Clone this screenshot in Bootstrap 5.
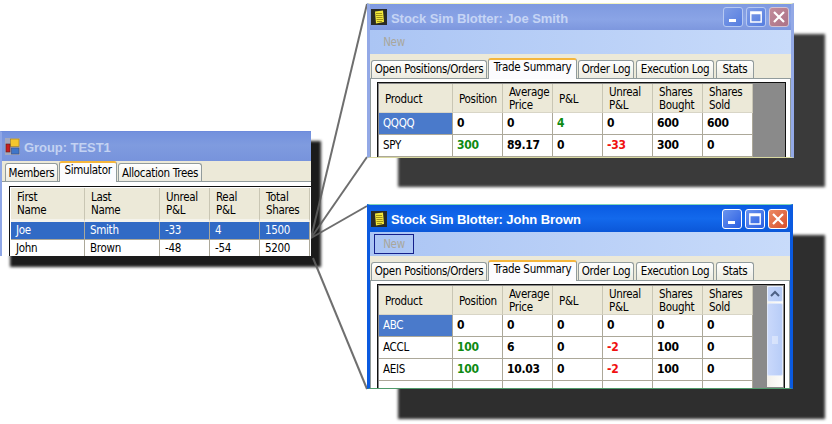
<!DOCTYPE html>
<html lang="en"><head><meta charset="utf-8"><title>Stock Sim</title>
<link href="https://cdn.jsdelivr.net/npm/bootstrap@5.3.0/dist/css/bootstrap.min.css" rel="stylesheet">
<style>
html,body{margin:0;background:#fff;overflow:hidden}
.canvas{position:relative;width:832px;height:424px;background:#fff;overflow:hidden;font-family:"DejaVu Sans Condensed","Liberation Sans",sans-serif;font-size:11.5px;letter-spacing:-.3px;line-height:13px;color:#000}
.drop{position:absolute;filter:blur(1.5px)}
.drop-a{left:10px;top:141px;width:311px;height:126px;background:#1b1b1b}
.drop-b{left:398px;top:34px;width:427px;height:153px;background:#3a3a3a}
.drop-c{left:398px;top:235px;width:427px;height:184px;background:#2e2e2e}
.links{position:absolute;left:0;top:0;width:832px;height:424px}
.win{position:absolute;display:flex;flex-direction:column;overflow:hidden;background:#ece9d8}
.win-a{left:0;top:131px;width:311px;height:125px;border-left:2px solid #8ea6e6;border-top:1px solid #6d8bdc}
.win-b{left:367px;top:3px;width:427px;height:155px;border:solid #8fa7e6;border-width:1px 3px 1px 3px;border-color:#f3f3c0 #93a9e6 #d8d8a0 #93a9e6}
.win-c{left:367px;top:204px;width:426px;height:185px;border:solid #0a5ae0;border-width:1px 3px 1px 3px;border-color:#7fd6b8 #0a5ae0 #4f9a6a #0a5ae0}
.ttl{flex:0 0 auto;display:flex;align-items:center;font-family:"Liberation Sans",sans-serif;font-weight:700;font-size:13px;letter-spacing:-.05px;white-space:nowrap}
.win-a .ttl{height:29px;background:linear-gradient(#7391dd,#7f9bdf 45%,#7793dc);color:#c3d2f2;padding-left:3px}
.win-b .ttl{height:26px;background:linear-gradient(#7f9ae0,#8aa4e6 60%,#7d97de);color:#c6d5f5;padding:0 2px 0 1px}
.win-c .ttl{height:27px;background:linear-gradient(#0a5be2,#1369ec 50%,#0b57d8);color:#fff;padding:0 2px 0 1px}
.ttl-txt{flex:1 1 auto;margin-left:4px;padding-top:2px}
.capbtn{flex:0 0 20px;width:20px;height:20px;border-radius:3px;display:flex;align-items:center;justify-content:center;margin-left:3px}
.win-b .capbtn{background:linear-gradient(135deg,#7e9ce6,#557de0);border:1px solid #b6c9f2}
.win-b .capbtn.cl{background:linear-gradient(135deg,#c28c9a,#ac7288);border-color:#d5c3d0}
.win-c .capbtn{background:linear-gradient(135deg,#6a94ee,#2a5ee2);border:1px solid #fff}
.win-c .capbtn.cl{background:linear-gradient(135deg,#ec8a64,#d8502c);border-color:#fff}
.tbar{flex:0 0 24px;height:24px;background:linear-gradient(90deg,#abc5f4,#c8dbfa);display:flex;align-items:center;padding-left:4px}
.newbtn{width:40px;height:20px;line-height:18px;text-align:center;color:#a9a79c;border:1px solid transparent}
.win-c .newbtn{border-color:#14208c}
.tabstrip.nav{flex:0 0 auto;display:flex;align-items:flex-end;flex-wrap:nowrap;border:0;background:#ece9d8;padding-left:1px;height:24px;position:relative;z-index:1}
.win-a .tabstrip.nav{height:20px;padding-left:3px}
.tabx{height:18px;line-height:17px;border:1px solid #919b9c;border-bottom:0;border-radius:3px 3px 0 0;background:linear-gradient(#fff,#ecebe0);text-align:center;margin-right:2px;white-space:nowrap}
.win-a .tabx{line-height:19px}
.tabx.on,.win-a .tabx.on{height:21px;line-height:15px;background:#fcfcfe;border-color:#919b9c;border-top:2px solid #f5b63c;margin:0 1px -1px -1px;position:relative}
.w1{width:116px}.w2{width:89px}.w3{width:56px}.w4{width:78px}.w5{width:38px}
.m1{width:53px}.m2{width:58px}.m3{width:84px}
.pane{flex:1 1 auto;min-height:0;background:#fff;border:1px solid #919b9c;border-bottom:0;padding:3px 4px 0 6px;display:flex}
.win-a .pane{border-right:0;border-left:0;padding:4px 0 0 7px}
.frame{flex:1 1 auto;border:1.5px solid #111;border-bottom:0;background:#8a8a8a;padding:1px;display:flex;overflow:hidden;min-width:0}
.win-a .frame{background:#fff;border-right:0;padding:1px 0 0 1px}
.gridt{flex:0 0 auto;align-self:flex-start}
table.gridt{table-layout:fixed;border-collapse:separate;border-spacing:0;margin:0;background:#fff}
.gridt th{font-weight:400;background:#ece9d8;height:29px;padding:2px 0 0 6px;vertical-align:middle;border-right:1px solid #c9c6b4;border-bottom:1px solid #d8d5c6;white-space:nowrap}
.gridt td{height:22px;padding:0 0 0 4px;border-right:1px solid #aca899;border-bottom:1px solid #aca899;vertical-align:middle;white-space:nowrap;background:#fff}
.win-a .gridt th{height:34px;padding-top:0;border-bottom:3px solid #f4f3ec}
.win-a .gridt td{height:18px;padding-left:5px}
.gridt td.sel{background:#4a7acb;color:#fff}
.win-a .gridt td.sel{background:#316ac5;color:#fff}
.gridt td.v{font-weight:700;padding-left:4px;font-size:12px;letter-spacing:-.3px}
.up{color:#0e8a12!important}.dn{color:#f01010!important}
.ca{width:74px}.cb{width:50px}.cc{width:75px}
.sbar{flex:0 0 16px;margin:0 0 0 auto;display:flex;flex-direction:column;background:linear-gradient(90deg,#f3f1ec,#fdfdfb);width:16px;gap:1px;align-self:stretch}
.sbtn{height:16px;background:linear-gradient(90deg,#c3d4fa,#b5cbf6);border:1px solid #e6eefc;border-radius:2px;display:flex;align-items:center;justify-content:center;flex:0 0 auto}
.sthumb{height:73px;background:linear-gradient(90deg,#c9d8fb,#b8cdf8);border:1px solid #dfe8fb;border-radius:2px;display:flex;align-items:center;justify-content:center;flex:0 0 auto}
</style></head><body>
<div class="canvas">
  <div class="drop drop-a"></div><div class="drop drop-b"></div><div class="drop drop-c"></div>
  <svg class="links" viewBox="0 0 832 424"><g stroke="#5f5f5f" stroke-width="2" fill="none" opacity=".9"><path d="M311 238L367 4"/><path d="M311 238L367 157"/><path d="M311 238L367 206"/><path d="M313 258L367 389"/></g></svg>

  <section class="win win-a">
    <div class="ttl">
      <svg width="15" height="17" viewBox="0 0 15 17"><rect width="15" height="17" fill="#a4a8bc"/><rect x="5.500" y="1" width="8.500" height="7.500" fill="#f4c62c" stroke="#9a7a20" stroke-width=".6"/><rect x="1" y="6" width="4" height="8" fill="#c81e1e" stroke="#5a2020" stroke-width=".6"/><rect x="6.500" y="10" width="7.500" height="6" fill="#3f76c8" stroke="#3a4f80" stroke-width=".6"/></svg>
      <span class="ttl-txt">Group: TEST1</span>
    </div>
    <ul class="nav tabstrip">
      <li class="tabx m1">Members</li><li class="tabx on m2">Simulator</li><li class="tabx m3">Allocation Trees</li>
    </ul>
    <div class="pane"><div class="frame">
      <table class="gridt">
        <colgroup><col class="ca"><col class="cc"><col class="cb"><col class="cb"><col class="cb"></colgroup>
        <thead><tr><th>First<br>Name</th><th>Last<br>Name</th><th>Unreal<br>P&amp;L</th><th>Real<br>P&amp;L</th><th>Total<br>Shares</th></tr></thead>
        <tbody>
          <tr><td class="sel">Joe</td><td class="sel">Smith</td><td class="sel">-33</td><td class="sel">4</td><td class="sel">1500</td></tr>
          <tr><td>John</td><td>Brown</td><td>-48</td><td>-54</td><td>5200</td></tr>
        </tbody>
      </table>
    </div></div>
  </section>

  <section class="win win-b">
    <div class="ttl">
      <svg width="16" height="16" viewBox="0 0 16 16"><rect width="16" height="16" fill="#2a2a24"/><path d="M4 2.500L12 1.500L13 13L5 14.500Z" fill="#f2e83a"/><path d="M5 4.500h6M5 6.500h6.500M5.500 8.500h6M5.500 10.500h6.500M6 12.500h5" stroke="#8a7a10" stroke-width=".8"/></svg>
      <span class="ttl-txt">Stock Sim Blotter: Joe Smith</span>
      <span class="capbtn"><svg width="12" height="12" viewBox="0 0 12 12"><rect x="2" y="8" width="7" height="3" fill="#fff"/></svg></span>
      <span class="capbtn"><svg width="12" height="12" viewBox="0 0 12 12"><path d="M.8 1h10.400v10H.8ZM.8 2.500h10.400" fill="none" stroke="#fff" stroke-width="1.400"/></svg></span>
      <span class="capbtn cl"><svg width="12" height="12" viewBox="0 0 12 12"><path d="M1 1L11 11M11 1L1 11" stroke="#fff" stroke-width="2.200"/></svg></span>
    </div>
    <div class="tbar"><div class="newbtn">New</div></div>
    <ul class="nav tabstrip">
      <li class="tabx w1">Open Positions/Orders</li><li class="tabx on w2">Trade Summary</li><li class="tabx w3">Order Log</li><li class="tabx w4">Execution Log</li><li class="tabx w5">Stats</li>
    </ul>
    <div class="pane"><div class="frame">
      <table class="gridt">
        <colgroup><col class="ca"><col class="cb"><col class="cb"><col class="cb"><col class="cb"><col class="cb"><col class="cb"></colgroup>
        <thead><tr><th>Product</th><th>Position</th><th>Average<br>Price</th><th>P&amp;L</th><th>Unreal<br>P&amp;L</th><th>Shares<br>Bought</th><th>Shares<br>Sold</th></tr></thead>
        <tbody>
          <tr><td class="sel">QQQQ</td><td class="v">0</td><td class="v">0</td><td class="v up">4</td><td class="v">0</td><td class="v">600</td><td class="v">600</td></tr>
          <tr><td>SPY</td><td class="v up">300</td><td class="v">89.17</td><td class="v">0</td><td class="v dn">-33</td><td class="v">300</td><td class="v">0</td></tr>
        </tbody>
      </table>
    </div></div>
  </section>

  <section class="win win-c">
    <div class="ttl">
      <svg width="16" height="16" viewBox="0 0 16 16"><rect width="16" height="16" fill="#2a2a24"/><path d="M4 2.500L12 1.500L13 13L5 14.500Z" fill="#f2e83a"/><path d="M5 4.500h6M5 6.500h6.500M5.500 8.500h6M5.500 10.500h6.500M6 12.500h5" stroke="#8a7a10" stroke-width=".8"/></svg>
      <span class="ttl-txt">Stock Sim Blotter: John Brown</span>
      <span class="capbtn"><svg width="12" height="12" viewBox="0 0 12 12"><rect x="2" y="8" width="7" height="3" fill="#fff"/></svg></span>
      <span class="capbtn"><svg width="12" height="12" viewBox="0 0 12 12"><path d="M.8 1h10.400v10H.8ZM.8 2.500h10.400" fill="none" stroke="#fff" stroke-width="1.400"/></svg></span>
      <span class="capbtn cl"><svg width="12" height="12" viewBox="0 0 12 12"><path d="M1 1L11 11M11 1L1 11" stroke="#fff" stroke-width="2.200"/></svg></span>
    </div>
    <div class="tbar"><div class="newbtn">New</div></div>
    <ul class="nav tabstrip">
      <li class="tabx w1">Open Positions/Orders</li><li class="tabx on w2">Trade Summary</li><li class="tabx w3">Order Log</li><li class="tabx w4">Execution Log</li><li class="tabx w5">Stats</li>
    </ul>
    <div class="pane"><div class="frame">
      <table class="gridt">
        <colgroup><col class="ca"><col class="cb"><col class="cb"><col class="cb"><col class="cb"><col class="cb"><col class="cb"></colgroup>
        <thead><tr><th>Product</th><th>Position</th><th>Average<br>Price</th><th>P&amp;L</th><th>Unreal<br>P&amp;L</th><th>Shares<br>Bought</th><th>Shares<br>Sold</th></tr></thead>
        <tbody>
          <tr><td class="sel">ABC</td><td class="v">0</td><td class="v">0</td><td class="v">0</td><td class="v">0</td><td class="v">0</td><td class="v">0</td></tr>
          <tr><td>ACCL</td><td class="v up">100</td><td class="v">6</td><td class="v">0</td><td class="v dn">-2</td><td class="v">100</td><td class="v">0</td></tr>
          <tr><td>AEIS</td><td class="v up">100</td><td class="v">10.03</td><td class="v">0</td><td class="v dn">-2</td><td class="v">100</td><td class="v">0</td></tr>
          <tr><td>&nbsp;</td><td></td><td></td><td></td><td></td><td></td><td></td></tr>
        </tbody>
      </table>
      <div class="sbar">
        <div class="sbtn"><svg width="10" height="8" viewBox="0 0 10 8"><path d="M1 6L5 2L9 6" fill="none" stroke="#4d6185" stroke-width="2"/></svg></div>
        <div class="sthumb"><svg width="8" height="8" viewBox="0 0 8 8"><path d="M1 1h6M1 3h6M1 5h6M1 7h6" stroke="#eef3fe" stroke-width="1"/></svg></div>
      </div>
    </div></div>
  </section>
</div>
<script src="https://cdn.jsdelivr.net/npm/bootstrap@5.3.0/dist/js/bootstrap.bundle.min.js"></script>
</body></html>
